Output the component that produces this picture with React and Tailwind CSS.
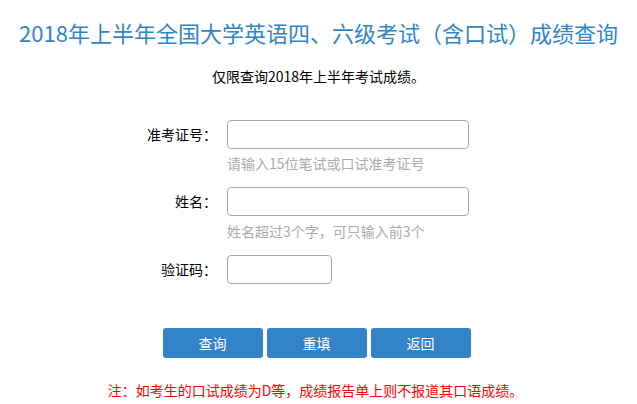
export default function App() {
  const font = { fontFamily: '"Noto Sans CJK SC", "Liberation Sans", sans-serif' };
  return (
    <div className="w-[637px] h-[404px] bg-white overflow-hidden" style={font}>
      <h1 className="pt-[16px] text-center text-[22px] leading-[32px] text-[#2f85c8]">
        2018年上半年全国大学英语四、六级考试（含口试）成绩查询
      </h1>
      <p className="mt-[18px] text-center text-[14px] leading-[20px] text-black">
        仅限查询2018年上半年考试成绩。
      </p>

      <div className="mt-[34px] flex flex-col">
        <div className="flex items-center">
          <label className="w-[217px] text-right text-[14px] text-black">准考证号：</label>
          <input className="ml-[10px] w-[242px] h-[29px] rounded-[4px] border border-[#aaa] outline-none" />
        </div>
        <div className="ml-[227px] mt-[4px] text-[14px] leading-[20px] text-[#aaa]">
          请输入15位笔试或口试准考证号
        </div>

        <div className="mt-[14px] flex items-center">
          <label className="w-[217px] text-right text-[14px] text-black">姓名：</label>
          <input className="ml-[10px] w-[242px] h-[29px] rounded-[4px] border border-[#aaa] outline-none" />
        </div>
        <div className="ml-[227px] mt-[5px] text-[14px] leading-[20px] text-[#aaa]">
          姓名超过3个字，可只输入前3个
        </div>

        <div className="mt-[14px] flex items-center">
          <label className="w-[217px] text-right text-[14px] text-black">验证码：</label>
          <input className="ml-[10px] w-[105px] h-[29px] rounded-[4px] border border-[#aaa] outline-none" />
        </div>
      </div>

      <div className="mt-[44px] flex justify-center gap-[4px] pr-[4px]">
        <button className="w-[100px] h-[30px] rounded-[3px] bg-[#3383c8] text-white text-[14px]">查询</button>
        <button className="w-[100px] h-[30px] rounded-[3px] bg-[#3383c8] text-white text-[14px]">重填</button>
        <button className="w-[100px] h-[30px] rounded-[3px] bg-[#3383c8] text-white text-[14px]">返回</button>
      </div>

      <p className="mt-[22px] text-center text-[14px] leading-[20px] text-[#ff0000] pr-[6px]">
        注：如考生的口试成绩为D等，成绩报告单上则不报道其口语成绩。
      </p>
    </div>
  );
}
